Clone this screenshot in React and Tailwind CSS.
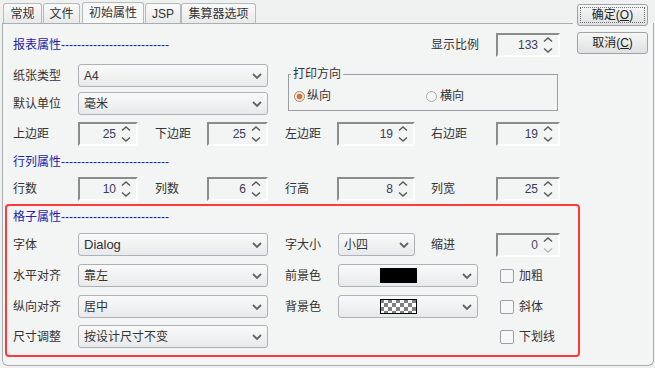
import React from 'react';

const FONT = "font-['Liberation_Sans','Noto_Sans_CJK_SC',sans-serif]";

const Chevron = () => (
  <svg width="10" height="6" viewBox="0 0 10 6">
    <path d="M1 1 L5 5 L9 1" fill="none" stroke="#5f6366" strokeWidth="1.8" />
  </svg>
);

const ArrowUp = ({ color = '#5a5a5a' }) => (
  <svg width="10" height="5" viewBox="0 0 10 5">
    <path d="M1 4.5 L5 1 L9 4.5" fill="none" stroke={color} strokeWidth="1.4" />
  </svg>
);

const ArrowDown = ({ color = '#5a5a5a' }) => (
  <svg width="10" height="5" viewBox="0 0 10 5">
    <path d="M1 0.5 L5 4 L9 0.5" fill="none" stroke={color} strokeWidth="1.4" />
  </svg>
);

const Spinner = ({ value, className, dimDown }) => (
  <div className={`flex h-[24px] items-stretch border-2 border-t-[#8c8c8c] border-l-[#8c8c8c] border-r-[#fdfdfd] border-b-[#fdfdfd] bg-[#f3f4f4] ${className}`}>
    <div className={`flex flex-1 items-center justify-end text-[12px] ${dimDown ? 'text-[#4a4a6a]' : 'text-[#3a3a5c]'}`}>{value}</div>
    <div className="flex w-[20px] flex-col items-center justify-center gap-[6px]">
      <ArrowUp />
      <ArrowDown color={dimDown ? '#b8b8b8' : '#5a5a5a'} />
    </div>
  </div>
);

const Combo = ({ children, className, center }) => (
  <div className={`flex h-[23px] items-center rounded-[3px] border border-[#adb2b6] bg-gradient-to-b from-[#fafafa] to-[#e8e9ea] ${className}`}>
    <div className={`flex flex-1 items-center ${center ? 'justify-center' : 'pl-[5px]'} text-[#333]`}>{children}</div>
    <div className="flex w-[21px] justify-center">
      <Chevron />
    </div>
  </div>
);

const Checkbox = ({ label, className }) => (
  <div className={`flex items-center ${className}`}>
    <div className="h-[14px] w-[14px] rounded-[2px] border border-[#9aa0a5] bg-[#f7f7f7]" />
    <span className="ml-[5px]">{label}</span>
  </div>
);

const Radio = ({ checked }) => (
  <svg width="11" height="11" viewBox="0 0 11 11">
    {checked ? (
      <>
        <circle cx="5.5" cy="5.5" r="5" fill="#f4e6da" stroke="#a88670" />
        <circle cx="5.5" cy="5.5" r="2.8" fill="#c9773f" />
      </>
    ) : (
      <circle cx="5.5" cy="5.5" r="5" fill="#f7f7f7" stroke="#a7abaf" />
    )}
  </svg>
);

const Section = ({ title }) => (
  <div className="flex items-center text-[#2323b0]">
    <span>{title}</span>
    <span className="font-['Liberation_Sans']">---------------------------</span>
  </div>
);

const Checker = () => (
  <svg width="37" height="15" viewBox="0 0 37 15">
    <defs>
      <pattern id="chk" width="8" height="8" patternUnits="userSpaceOnUse">
        <rect width="8" height="8" fill="#ffffff" />
        <rect width="4" height="4" fill="#808080" />
        <rect x="4" y="4" width="4" height="4" fill="#808080" />
      </pattern>
    </defs>
    <rect x="0.5" y="0.5" width="36" height="14" fill="url(#chk)" stroke="#000" />
  </svg>
);

const Tab = ({ label, className, active }) => (
  <div
    className={`flex items-center justify-center rounded-t-[3px] border border-b-0 border-[#b5babd] ${
      active ? 'h-[21px] bg-[#f6f7f7]' : 'h-[20px] bg-gradient-to-b from-[#fafafa] to-[#e8e9ea]'
    } ${className}`}
  >
    {label}
  </div>
);

const Button = ({ label, hot, focused }) => (
  <div
    className={`flex h-[22px] w-[71px] items-center justify-center rounded-[3px] border border-[#9ea3a7] bg-gradient-to-b from-[#f7f7f7] to-[#dfe0e1] text-[#222] ${
      focused ? 'outline-1 outline-dotted outline-[#707070] outline-offset-[-4px]' : ''
    }`}
  >
    {label}(<span className="underline">{hot}</span>)
  </div>
);

const SpinnerRow = ({ items }) => (
  <div className="flex h-[24px] items-center">
    <span className="w-[65px]">{items[0][0]}</span>
    <Spinner value={items[0][1]} className="w-[60px]" />
    <span className="ml-[17px] w-[52px]">{items[1][0]}</span>
    <Spinner value={items[1][1]} className="w-[61px]" />
    <span className="ml-[17px] w-[52px]">{items[2][0]}</span>
    <Spinner value={items[2][1]} className="w-[78px]" />
    <span className="ml-[16px] w-[65px]">{items[3][0]}</span>
    <Spinner value={items[3][1]} className="w-[64px]" />
  </div>
);

export default function App() {
  return (
    <div className={`flex h-[368px] w-[655px] flex-col overflow-hidden bg-[#eff0f0] text-[12px] text-[#333] ${FONT}`}>
      {/* tabs + buttons */}
      <div className="flex h-[23px] items-end">
        <Tab label="常规" className="ml-[3px] w-[39px]" />
        <Tab label="文件" className="ml-[1px] w-[37px]" />
        <Tab label="初始属性" className="ml-[2px] w-[62px]" active />
        <Tab label="JSP" className="ml-[1px] w-[36px]" />
        <Tab label="集算器选项" className="w-[75px]" />
        <div className="relative z-10 mr-[7px] ml-auto flex flex-col gap-[6px] self-start pt-[4px]">
          <Button label="确定" hot="O" focused />
          <Button label="取消" hot="C" />
        </div>
      </div>

      {/* panel */}
      <div className="ml-[2px] flex h-[343px] w-[652px] flex-col rounded-b-[6px] border-r border-b border-l border-[#a9aeb1] bg-[#f3f4f4]">
        <div className="h-px w-[570px] bg-[#a9aeb1]" />
        <div className="flex flex-col pl-[10px]">
          {/* 报表属性 */}
          <div className="mt-[9px] flex h-[24px] items-center">
            <div className="w-[418px]">
              <Section title="报表属性" />
            </div>
            <span className="w-[65px]">显示比例</span>
            <Spinner value="133" className="w-[64px]" />
          </div>

          <div className="mt-[7px] flex items-start">
            <div className="flex flex-col">
              <div className="flex h-[23px] items-center">
                <span className="w-[65px]">纸张类型</span>
                <Combo className="w-[190px]">A4</Combo>
              </div>
              <div className="mt-[5px] flex h-[23px] items-center">
                <span className="w-[65px]">默认单位</span>
                <Combo className="w-[190px]">毫米</Combo>
              </div>
            </div>
            <fieldset className="mt-[4px] ml-[20px] w-[270px] border border-[#9a9fa3] pb-[7px]">
              <legend className="ml-[2px] px-[2px] leading-[12px]">打印方向</legend>
              <div className="mt-[9px] flex h-[14px] items-center">
                <span className="ml-[5px] flex"><Radio checked /></span>
                <span className="ml-[2px]">纵向</span>
                <span className="ml-[95px] flex"><Radio /></span>
                <span className="ml-[3px]">横向</span>
              </div>
            </fieldset>
          </div>

          <div className="mt-[7px]">
            <SpinnerRow items={[['上边距', '25'], ['下边距', '25'], ['左边距', '19'], ['右边距', '19']]} />
          </div>

          {/* 行列属性 */}
          <div className="mt-[6px] flex h-[20px] items-center">
            <Section title="行列属性" />
          </div>
          <div className="mt-[5px]">
            <SpinnerRow items={[['行数', '10'], ['列数', '6'], ['行高', '8'], ['列宽', '25']]} />
          </div>

          {/* 格子属性 */}
          <div className="mt-[3px] ml-[-8px] flex w-[575px] flex-col rounded-[4px] border-2 border-[#ff3a3a] pb-[7px] pl-[6px]">
            <div className="flex h-[22px] items-center">
              <Section title="格子属性" />
            </div>
            <div className="mt-[5px] flex h-[23px] items-center">
              <span className="w-[65px]">字体</span>
              <Combo className="w-[190px]"><span className="text-[13px]">Dialog</span></Combo>
              <span className="ml-[17px] w-[53px]">字大小</span>
              <Combo className="w-[77px]">小四</Combo>
              <span className="ml-[16px] w-[65px]">缩进</span>
              <Spinner value="0" className="w-[64px]" dimDown />
            </div>
            <div className="mt-[8px] flex h-[23px] items-center">
              <span className="w-[65px]">水平对齐</span>
              <Combo className="w-[190px]">靠左</Combo>
              <span className="ml-[17px] w-[53px]">前景色</span>
              <Combo className="w-[140px]" center>
                <div className="ml-[1px] h-[15px] w-[37px] bg-black" />
              </Combo>
              <Checkbox label="加粗" className="ml-[22px]" />
            </div>
            <div className="mt-[8px] flex h-[23px] items-center">
              <span className="w-[65px]">纵向对齐</span>
              <Combo className="w-[190px]">居中</Combo>
              <span className="ml-[17px] w-[53px]">背景色</span>
              <Combo className="w-[140px]" center>
                <div className="ml-[1px] flex"><Checker /></div>
              </Combo>
              <Checkbox label="斜体" className="ml-[22px]" />
            </div>
            <div className="mt-[7px] flex h-[23px] items-center">
              <span className="w-[65px]">尺寸调整</span>
              <Combo className="w-[190px]">按设计尺寸不变</Combo>
              <Checkbox label="下划线" className="ml-[232px]" />
            </div>
          </div>
        </div>
      </div>
    </div>
  );
}
